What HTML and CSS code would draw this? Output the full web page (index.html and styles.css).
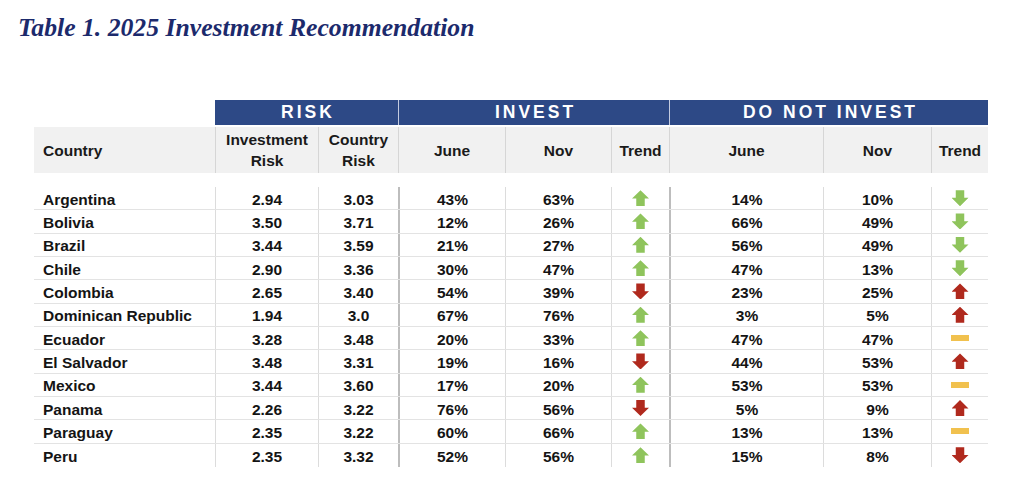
FILE: index.html
```html
<!DOCTYPE html>
<html lang="en">
<head>
<meta charset="utf-8">
<title>Table 1. 2025 Investment Recommendation</title>
<link rel="stylesheet" href="styles.css">
</head>
<body>
<h1 class="title">Table 1. 2025 Investment Recommendation</h1>
<div class="table">
  <div class="band">
    <div class="band-empty"></div>
    <div class="band-cell risk">RISK</div>
    <div class="band-cell invest">INVEST</div>
    <div class="band-cell dni">DO NOT INVEST</div>
  </div>
  <div class="row head">
    <div class="c-country">Country</div>
    <div>Investment<br>Risk</div>
    <div>Country<br>Risk</div>
    <div>June</div>
    <div>Nov</div>
    <div>Trend</div>
    <div>June</div>
    <div>Nov</div>
    <div>Trend</div>
  </div>
  <div class="body">
    <div class="row"><div class="c-country">Argentina</div><div>2.94</div><div>3.03</div><div>43%</div><div>63%</div><div class="trend"><span class="arrow up green"></span></div><div>14%</div><div>10%</div><div class="trend"><span class="arrow down green"></span></div></div>
    <div class="row"><div class="c-country">Bolivia</div><div>3.50</div><div>3.71</div><div>12%</div><div>26%</div><div class="trend"><span class="arrow up green"></span></div><div>66%</div><div>49%</div><div class="trend"><span class="arrow down green"></span></div></div>
    <div class="row"><div class="c-country">Brazil</div><div>3.44</div><div>3.59</div><div>21%</div><div>27%</div><div class="trend"><span class="arrow up green"></span></div><div>56%</div><div>49%</div><div class="trend"><span class="arrow down green"></span></div></div>
    <div class="row"><div class="c-country">Chile</div><div>2.90</div><div>3.36</div><div>30%</div><div>47%</div><div class="trend"><span class="arrow up green"></span></div><div>47%</div><div>13%</div><div class="trend"><span class="arrow down green"></span></div></div>
    <div class="row"><div class="c-country">Colombia</div><div>2.65</div><div>3.40</div><div>54%</div><div>39%</div><div class="trend"><span class="arrow down red"></span></div><div>23%</div><div>25%</div><div class="trend"><span class="arrow up red"></span></div></div>
    <div class="row"><div class="c-country">Dominican Republic</div><div>1.94</div><div>3.0</div><div>67%</div><div>76%</div><div class="trend"><span class="arrow up green"></span></div><div>3%</div><div>5%</div><div class="trend"><span class="arrow up red"></span></div></div>
    <div class="row"><div class="c-country">Ecuador</div><div>3.28</div><div>3.48</div><div>20%</div><div>33%</div><div class="trend"><span class="arrow up green"></span></div><div>47%</div><div>47%</div><div class="trend"><span class="flat"></span></div></div>
    <div class="row"><div class="c-country">El Salvador</div><div>3.48</div><div>3.31</div><div>19%</div><div>16%</div><div class="trend"><span class="arrow down red"></span></div><div>44%</div><div>53%</div><div class="trend"><span class="arrow up red"></span></div></div>
    <div class="row"><div class="c-country">Mexico</div><div>3.44</div><div>3.60</div><div>17%</div><div>20%</div><div class="trend"><span class="arrow up green"></span></div><div>53%</div><div>53%</div><div class="trend"><span class="flat"></span></div></div>
    <div class="row"><div class="c-country">Panama</div><div>2.26</div><div>3.22</div><div>76%</div><div>56%</div><div class="trend"><span class="arrow down red"></span></div><div>5%</div><div>9%</div><div class="trend"><span class="arrow up red"></span></div></div>
    <div class="row"><div class="c-country">Paraguay</div><div>2.35</div><div>3.22</div><div>60%</div><div>66%</div><div class="trend"><span class="arrow up green"></span></div><div>13%</div><div>13%</div><div class="trend"><span class="flat"></span></div></div>
    <div class="row"><div class="c-country">Peru</div><div>2.35</div><div>3.32</div><div>52%</div><div>56%</div><div class="trend"><span class="arrow up green"></span></div><div>15%</div><div>8%</div><div class="trend"><span class="arrow down red"></span></div></div>
  </div>
</div>
</body>
</html>
```

FILE: styles.css
```css
* { box-sizing: border-box; }

html, body {
  margin: 0;
  padding: 0;
  background: #ffffff;
}

body {
  font-family: "Liberation Sans", Arial, sans-serif;
  color: #141414;
}

.title {
  margin: 0;
  padding: 15px 0 0 18px;
  font-family: "Liberation Serif", "Times New Roman", serif;
  font-style: italic;
  font-weight: bold;
  font-size: 25.7px;
  line-height: 26px;
  color: #1c2a6c;
}

.table {
  margin: 59px 0 0 34px;
  width: 954px;
}

.band,
.row {
  display: grid;
  grid-template-columns: 181px 103px 80px 107px 106px 58px 154px 108px 57px;
}

.band {
  height: 25px;
  margin-bottom: 2px;
}

.band-empty { grid-column: 1; }

.band-cell {
  background: #2d4986;
  color: #ffffff;
  font-weight: bold;
  font-size: 17.5px;
  letter-spacing: 3px;
  display: flex;
  align-items: center;
  justify-content: center;
  padding-left: 3px;
}

.band-cell.risk { grid-column: 2 / span 2; }
.band-cell.invest { grid-column: 4 / span 3; border-left: 1px solid #c3cbe0; }
.band-cell.dni { grid-column: 7 / span 3; border-left: 1px solid #c3cbe0; }

.row > div {
  display: flex;
  align-items: center;
  justify-content: center;
  text-align: center;
  font-weight: bold;
  font-size: 15.5px;
}

.row > .c-country {
  justify-content: flex-start;
  text-align: left;
  padding-left: 9px;
}

.head {
  background: #f1f1f1;
  height: 46px;
  margin-bottom: 14px;
}

.head > div {
  line-height: 21px;
  color: #1a1a1a;
}

.head > div:nth-child(n+2) {
  border-left: 1px solid #d6d6d6;
}

.body .row {
  height: 23.33px;
  border-bottom: 1px solid #e3e3e3;
}

.body .row:last-child {
  border-bottom: none;
}

.body .row > div {
  padding-top: 3px;
}

.body .row > div.trend {
  padding-top: 0;
}

.body .row > div:nth-child(n+2) {
  border-left: 1px solid #dcdcdc;
}

.body .row > div:nth-child(4),
.body .row > div:nth-child(7) {
  border-left: 2px solid #bdbdbd;
}

.arrow {
  display: block;
  width: 17px;
  height: 16px;
}

.arrow.up {
  clip-path: polygon(50% 0, 100% 52%, 75% 52%, 75% 100%, 25% 100%, 25% 52%, 0 52%);
}

.arrow.down {
  clip-path: polygon(25% 0, 75% 0, 75% 48%, 100% 48%, 50% 100%, 0 48%, 25% 48%);
}

.arrow.green { background: #8fc45c; }
.arrow.red { background: #b0291d; }

.flat {
  display: block;
  width: 18px;
  height: 6px;
  background: #f1c14e;
}
```
